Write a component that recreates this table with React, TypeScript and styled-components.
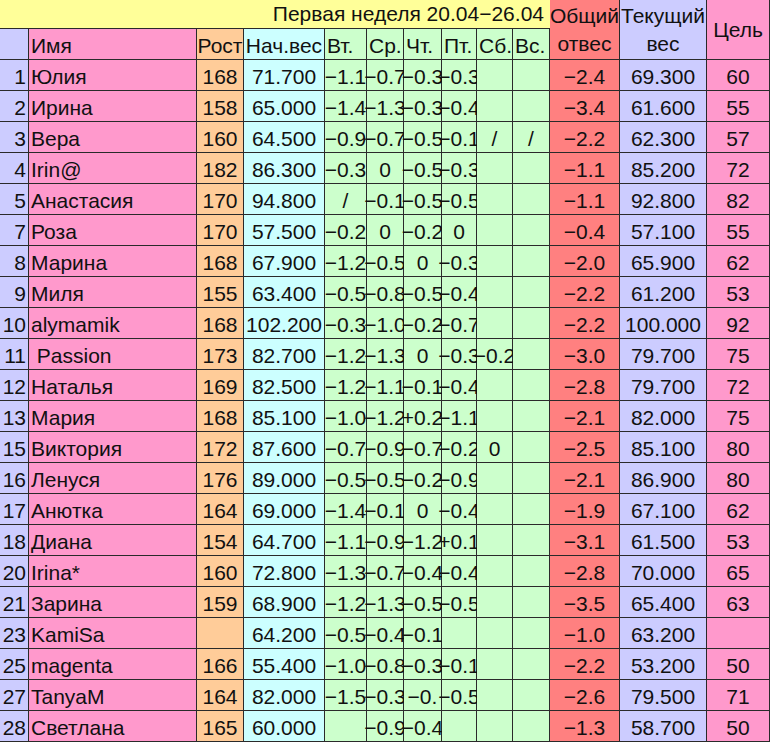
import React from "react";
import styled, { createGlobalStyle } from "styled-components";

const GlobalStyle = createGlobalStyle`
  html, body { margin: 0; padding: 0; background: #ffffff; }
  body { font-family: "Liberation Sans", Arial, sans-serif; }
`;

const C = {
  lav: "#ccccff",
  pink: "#ff99cc",
  orange: "#ffcc99",
  cyan: "#ccffff",
  green: "#ccffcc",
  red: "#ff8080",
  yellow: "#ffff99",
  line: "#2a2a2a",
};

const Sheet = styled.div`
  display: grid;
  grid-template-columns: 29px 168px 47px 81px 42px 37px 38px 35px 36px 37px 70px 87px 63px;
  grid-template-rows: 29px 31px;
  grid-auto-rows: 31px;
  width: 770px;
  font-family: "Liberation Sans", Arial, sans-serif;
  font-size: 21px;
  color: #111;
`;

type Align = "left" | "center" | "right";

const Cell = styled.div<{ $bg: string; $align?: Align }>`
  box-sizing: border-box;
  background: ${(p) => p.$bg};
  border-right: 1px solid ${C.line};
  border-bottom: 1px solid ${C.line};
  display: flex;
  align-items: center;
  justify-content: ${(p) =>
    p.$align === "left" ? "flex-start" : p.$align === "right" ? "flex-end" : "center"};
  padding: 3px ${(p) => (p.$align === "center" ? 0 : 2)}px 0;
  white-space: pre;
  overflow: visible;
  min-width: 0;
`;

const TitleCell = styled(Cell)`
  grid-row: 1;
  grid-column: 1 / 11;
  border-right: none;
  padding: 0 6px 0 0;
`;

const TallHead = styled(Cell)<{ $col: number }>`
  grid-row: 1 / 3;
  grid-column: ${(p) => p.$col};
  flex-direction: column;
  line-height: 28px;
  padding: 0;
`;

const Line = styled.span`
  display: block;
`;

type Row = string[];

const M = "\u2212";

const rows: Row[] = [
  ["1", "Юлия", "168", "71.700", `${M}1.1`, `${M}0.7`, `${M}0.3`, `${M}0.3`, "", "", `${M}2.4`, "69.300", "60"],
  ["2", "Ирина", "158", "65.000", `${M}1.4`, `${M}1.3`, `${M}0.3`, `${M}0.4`, "", "", `${M}3.4`, "61.600", "55"],
  ["3", "Вера", "160", "64.500", `${M}0.9`, `${M}0.7`, `${M}0.5`, `${M}0.1`, "/", "/", `${M}2.2`, "62.300", "57"],
  ["4", "Irin@", "182", "86.300", `${M}0.3`, "0", `${M}0.5`, `${M}0.3`, "", "", `${M}1.1`, "85.200", "72"],
  ["5", "Анастасия", "170", "94.800", "/", `${M}0.1`, `${M}0.5`, `${M}0.5`, "", "", `${M}1.1`, "92.800", "82"],
  ["7", "Роза", "170", "57.500", `${M}0.2`, "0", `${M}0.2`, "0", "", "", `${M}0.4`, "57.100", "55"],
  ["8", "Марина", "168", "67.900", `${M}1.2`, `${M}0.5`, "0", `${M}0.3`, "", "", `${M}2.0`, "65.900", "62"],
  ["9", "Миля", "155", "63.400", `${M}0.5`, `${M}0.8`, `${M}0.5`, `${M}0.4`, "", "", `${M}2.2`, "61.200", "53"],
  ["10", "alymamik", "168", "102.200", `${M}0.3`, `${M}1.0`, `${M}0.2`, `${M}0.7`, "", "", `${M}2.2`, "100.000", "92"],
  ["11", " Passion", "173", "82.700", `${M}1.2`, `${M}1.3`, "0", `${M}0.3`, `${M}0.2`, "", `${M}3.0`, "79.700", "75"],
  ["12", "Наталья", "169", "82.500", `${M}1.2`, `${M}1.1`, `${M}0.1`, `${M}0.4`, "", "", `${M}2.8`, "79.700", "72"],
  ["13", "Мария", "168", "85.100", `${M}1.0`, `${M}1.2`, "+0.2", `${M}1.1`, "", "", `${M}2.1`, "82.000", "75"],
  ["15", "Виктория", "172", "87.600", `${M}0.7`, `${M}0.9`, `${M}0.7`, `${M}0.2`, "0", "", `${M}2.5`, "85.100", "80"],
  ["16", "Ленуся", "176", "89.000", `${M}0.5`, `${M}0.5`, `${M}0.2`, `${M}0.9`, "", "", `${M}2.1`, "86.900", "80"],
  ["17", "Анютка", "164", "69.000", `${M}1.4`, `${M}0.1`, "0", `${M}0.4`, "", "", `${M}1.9`, "67.100", "62"],
  ["18", "Диана", "154", "64.700", `${M}1.1`, `${M}0.9`, `${M}1.2`, "+0.1", "", "", `${M}3.1`, "61.500", "53"],
  ["20", "Irina*", "160", "72.800", `${M}1.3`, `${M}0.7`, `${M}0.4`, `${M}0.4`, "", "", `${M}2.8`, "70.000", "65"],
  ["21", "Зарина", "159", "68.900", `${M}1.2`, `${M}1.3`, `${M}0.5`, `${M}0.5`, "", "", `${M}3.5`, "65.400", "63"],
  ["23", "KamiSa", "", "64.200", `${M}0.5`, `${M}0.4`, `${M}0.1`, "", "", "", `${M}1.0`, "63.200", ""],
  ["25", "magenta", "166", "55.400", `${M}1.0`, `${M}0.8`, `${M}0.3`, `${M}0.1`, "", "", `${M}2.2`, "53.200", "50"],
  ["27", "TanyaM", "164", "82.000", `${M}1.5`, `${M}0.3`, `${M}0.`, `${M}0.5`, "", "", `${M}2.6`, "79.500", "71"],
  ["28", "Светлана", "165", "60.000", "", `${M}0.9`, `${M}0.4`, "", "", "", `${M}1.3`, "58.700", "50"],
];

const colBg = [C.lav, C.pink, C.orange, C.cyan, C.green, C.green, C.green, C.green, C.green, C.green, C.red, C.lav, C.pink];
const colAlign: Align[] = ["right", "left", "center", "center", "center", "center", "center", "center", "center", "center", "center", "center", "center"];

const heads = ["", "Имя", "Рост", "Нач.вес", "Вт.", "Ср.", "Чт.", "Пт.", "Сб.", "Вс."];
const headAlign: Align[] = ["left", "left", "center", "center", "left", "left", "left", "left", "left", "left"];

export default function App() {
  return (
    <>
      <GlobalStyle />
      <Sheet>
        <TitleCell $bg={C.yellow} $align="right">Первая неделя 20.04{M}26.04</TitleCell>
        <TallHead $col={11} $bg={C.red}>
          <Line>Общий</Line>
          <Line>отвес</Line>
        </TallHead>
        <TallHead $col={12} $bg={C.lav}>
          <Line>Текущий</Line>
          <Line>вес</Line>
        </TallHead>
        <TallHead $col={13} $bg={C.pink}>
          <Line>Цель</Line>
        </TallHead>
        {heads.map((h, i) => (
          <Cell key={"h" + i} $bg={colBg[i]} $align={headAlign[i]}>
            {h}
          </Cell>
        ))}
        {rows.map((r, ri) =>
          r.map((v, ci) => (
            <Cell key={ri + "-" + ci} $bg={colBg[ci]} $align={colAlign[ci]}>
              {v}
            </Cell>
          ))
        )}
      </Sheet>
    </>
  );
}
